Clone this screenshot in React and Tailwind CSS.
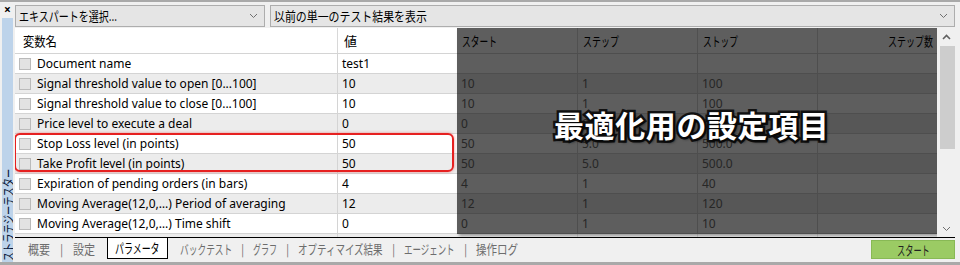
import React from "react";

const rows = [
  { name: "Document name", value: "test1", start: "", step: "", stop: "" },
  { name: "Signal threshold value to open [0...100]", value: "10", start: "10", step: "1", stop: "100" },
  { name: "Signal threshold value to close [0...100]", value: "10", start: "10", step: "1", stop: "100" },
  { name: "Price level to execute a deal", value: "0", start: "0", step: "0", stop: "0" },
  { name: "Stop Loss level (in points)", value: "50", start: "50", step: "5.0", stop: "500.0" },
  { name: "Take Profit level (in points)", value: "50", start: "50", step: "5.0", stop: "500.0" },
  { name: "Expiration of pending orders (in bars)", value: "4", start: "4", step: "1", stop: "40" },
  { name: "Moving Average(12,0,…) Period of averaging", value: "12", start: "12", step: "1", stop: "120" },
  { name: "Moving Average(12,0,…) Time shift", value: "0", start: "0", step: "1", stop: "10" },
];

// the UI font has narrow kana, so labels are squeezed horizontally to the reference widths
const tabs = [
  { label: "概要", w: "w-[22px]", s: "scale-x-[0.85]" },
  { label: "設定", w: "w-[22px]", s: "scale-x-[0.85]" },
  { label: "パラメータ", w: "w-[45px]", s: "scale-x-[0.69]", active: true },
  { label: "バックテスト", w: "w-[52px]", s: "scale-x-[0.67]" },
  { label: "グラフ", w: "w-[24px]", s: "scale-x-[0.62]" },
  { label: "オプティマイズ結果", w: "w-[85px]", s: "scale-x-[0.73]" },
  { label: "エージェント", w: "w-[51px]", s: "scale-x-[0.65]" },
  { label: "操作ログ", w: "w-[42px]", s: "scale-x-[0.81]" },
];

function Squeeze({ w, s, children, className = "" }) {
  return (
    <span className={`inline-block whitespace-nowrap ${w} ${className}`}>
      <span className={`inline-block origin-left ${s}`}>{children}</span>
    </span>
  );
}

function Chevron({ up }) {
  return (
    <svg width="9" height="6" viewBox="0 0 9 6" className="block">
      <path
        d={up ? "M1 5 L4.5 1.5 L8 5" : "M1 1 L4.5 4.5 L8 1"}
        fill="none"
        stroke={up ? "#606060" : "#707070"}
        strokeWidth={up ? "1.6" : "1"}
      />
    </svg>
  );
}

function Dropdown({ children, className }) {
  return (
    <div className={`h-[22px] flex items-center justify-between bg-[#e5e5e5] border border-[#adadad] pl-[3px] pr-[6px] ${className}`}>
      {children}
      <Chevron />
    </div>
  );
}

export default function App() {
  return (
    <div className="w-[960px] h-[265px] bg-[#f0f0f0] border-t-2 border-b-[3px] border-[#a9a9a9] flex overflow-hidden font-['Noto_Sans','Noto_Sans_CJK_JP',sans-serif] text-[12px] text-black">
      {/* side strip */}
      <div className="w-[15px] flex flex-col">
        <div className="h-[16px] flex items-center justify-center text-[12px] font-bold leading-none">×</div>
        <div className="flex-1 mx-[2px] bg-[#bdd3ea] flex flex-col justify-end items-center overflow-hidden">
          <span className="h-[94px] flex items-center justify-center">
            <span className="[writing-mode:vertical-rl] [text-orientation:sideways] rotate-180 scale-y-[0.71] text-[13px] leading-none whitespace-nowrap text-[#0b1a3c] font-['Noto_Sans_CJK_JP',sans-serif]">
              ストラテジーテスター
            </span>
          </span>
        </div>
      </div>

      <div className="flex-1 flex flex-col pt-[3px]">
        {/* selectors */}
        <div className="flex gap-[5px] pr-[5px] text-[13px] font-['Noto_Sans_CJK_JP',sans-serif]">
          <Dropdown className="w-[250px]">
            <Squeeze w="w-[100px]" s="scale-x-[0.77]">エキスパートを選択...</Squeeze>
          </Dropdown>
          <Dropdown className="flex-1">
            <Squeeze w="w-[153px]" s="scale-x-[0.84]">以前の単一のテスト結果を表示</Squeeze>
          </Dropdown>
        </div>

        {/* table + scrollbar */}
        <div className="mt-[1px] h-[209px] flex">
          <div className="relative w-[922px] bg-white overflow-hidden">
            <div className="grid grid-cols-[322px_120px_120px_120px_120px_120px] h-[25px] text-[13px] font-['Noto_Sans_CJK_JP',sans-serif]">
              <div className="pl-[8px] flex items-center">
                <Squeeze w="w-[34px]" s="scale-x-[0.87]">変数名</Squeeze>
              </div>
              <div className="pl-[6px] border-l border-[#d8d8d8] flex items-center">値</div>
              <div className="pl-[5px] flex items-center">
                <Squeeze w="w-[35px]" s="scale-x-[0.67]">スタート</Squeeze>
              </div>
              <div className="pl-[5px] border-l border-[#d8d8d8] flex items-center">
                <Squeeze w="w-[36px]" s="scale-x-[0.69]">ステップ</Squeeze>
              </div>
              <div className="pl-[5px] border-l border-[#d8d8d8] flex items-center">
                <Squeeze w="w-[35px]" s="scale-x-[0.67]">ストップ</Squeeze>
              </div>
              <div className="pr-[4px] border-l border-[#d8d8d8] flex items-center justify-end">
                <Squeeze w="w-[45px]" s="scale-x-[0.69]">ステップ数</Squeeze>
              </div>
            </div>
            {rows.map((r, i) => (
              <div
                key={i}
                className={`grid grid-cols-[322px_120px_120px_120px_120px_120px] h-[20px] border-t border-[#d4d4d4] ${i % 2 === 1 ? "bg-[#ececec]" : "bg-white"}`}
              >
                <div className="flex items-center pl-[4px]">
                  <span className="w-[12px] h-[12px] bg-[#e2e2e2] border border-[#bababa] mr-[6px]" />
                  <span>{r.name}</span>
                </div>
                <div className="flex items-center pl-[4px] border-l border-[#d4d4d4]">{r.value}</div>
                <div className="flex items-center pl-[4px] text-[#6a6a6a]">{r.start}</div>
                <div className="flex items-center pl-[4px] text-[#6a6a6a] border-l border-[#d4d4d4]">{r.step}</div>
                <div className="flex items-center pl-[4px] text-[#6a6a6a] border-l border-[#d4d4d4]">{r.stop}</div>
                <div className="border-l border-[#d4d4d4]" />
              </div>
            ))}
            <div className="grid grid-cols-[322px_120px_120px_120px_120px_120px] h-[20px] border-t border-[#d4d4d4] bg-[#ececec]">
              <div />
              <div className="border-l border-[#d4d4d4]" />
              <div />
              <div className="border-l border-[#d4d4d4]" />
              <div className="border-l border-[#d4d4d4]" />
              <div className="border-l border-[#d4d4d4]" />
            </div>

            {/* darkened optimisation area */}
            <div className="absolute left-[442px] top-0 w-[480px] h-[206px] bg-[rgba(0,0,0,0.63)] shadow-[2px_2px_3px_rgba(0,0,0,0.35)]" />

            {/* highlight box */}
            <div className="absolute left-[-1px] top-[105px] w-[440px] h-[39px] border-2 border-[#e62020] rounded-[6px] shadow-[0_0_3px_rgba(230,32,32,0.5)]" />

            {/* caption */}
            <div className="absolute left-[539px] top-[81px] text-[30px] tracking-[0.6px] font-bold leading-none text-white font-['Noto_Sans_CJK_JP',sans-serif] [-webkit-text-stroke:5px_#111] [paint-order:stroke_fill] [text-shadow:2px_2px_3px_rgba(0,0,0,0.8)]">
              最適化用の設定項目
            </div>
          </div>

          {/* scrollbar */}
          <div className="w-[18px] flex flex-col items-center">
            <div className="h-[18px] flex items-center justify-center">
              <Chevron up />
            </div>
            <div className="w-[15px] h-[103px] bg-[#cdcdcd] ml-[2px]" />
            <div className="flex-1" />
            <div className="h-[16px] flex items-center justify-center">
              <Chevron />
            </div>
          </div>
        </div>

        {/* bottom tabs */}
        <div className="h-[22px] border-t border-black mr-[5px] flex items-start justify-between text-[13px] font-['Noto_Sans_CJK_JP',sans-serif]">
          <div className="flex items-center h-[21px] pl-[13px]">
            {tabs.map((t, i) => (
              <React.Fragment key={t.label}>
                {i > 0 && !t.active && !tabs[i - 1].active && (
                  <span className={`${i === 1 ? "w-[23px]" : "w-[21px]"} flex justify-center text-[#7a7a7a] text-[12px]`}>|</span>
                )}
                {t.active ? (
                  <div className="mx-[12px] h-[21px] px-[7px] bg-white border-x border-b border-black flex items-center text-black -mt-px">
                    <Squeeze w={t.w} s={t.s}>{t.label}</Squeeze>
                  </div>
                ) : (
                  <Squeeze w={t.w} s={t.s} className="text-[#6d6d6d]">{t.label}</Squeeze>
                )}
              </React.Fragment>
            ))}
          </div>
          <div className="mt-[2px] w-[84px] h-[19px] bg-[#9bcb64] border border-[#88b955] flex items-center justify-center text-[#222]">
            <Squeeze w="w-[33px]" s="scale-x-[0.63]">スタート</Squeeze>
          </div>
        </div>
      </div>
    </div>
  );
}
